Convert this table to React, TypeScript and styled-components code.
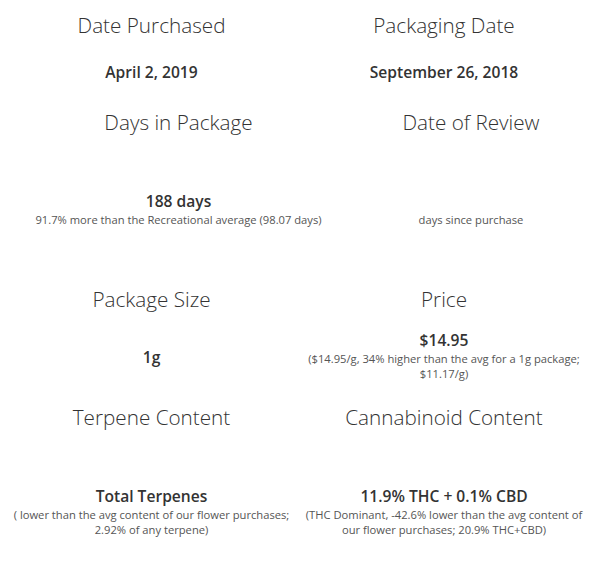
import * as React from 'react';
import styled, { createGlobalStyle } from 'styled-components';

const GlobalStyle = createGlobalStyle`
    html, body {
        margin: 0;
        padding: 0;
        background: #fff;
    }
    body {
        font-family: "Open Sans", "Liberation Sans", sans-serif;
        color: #333;
    }
`;

const Page = styled.div`
    width: 593px;
    height: 572px;
    display: grid;
    grid-template-columns: 303px 282px;
    grid-template-rows: 97px 177px 118px 180px;
    overflow: hidden;
`;

const Tile = styled.div<{ $shift?: number }>`
    display: flex;
    flex-direction: column;
    padding-left: ${(p) => p.$shift || 0}px;
`;

const Title = styled.div`
    flex-shrink: 0;
    height: 50px;
    display: flex;
    align-items: center;
    justify-content: center;
    font-size: 20.7px;
    font-weight: 300;
    color: #333;
    white-space: nowrap;
`;

const Body = styled.div<{ $top: number }>`
    flex-shrink: 0;
    display: flex;
    flex-direction: column;
    align-items: center;
    padding-top: ${(p) => p.$top}px;
`;

const Value = styled.div`
    height: 22px;
    line-height: 22px;
    font-size: 15.6px;
    font-weight: 600;
    color: #333;
    white-space: nowrap;
`;

const Note = styled.div`
    line-height: 15px;
    font-size: 11.2px;
    color: #555;
    white-space: nowrap;
    text-align: center;
`;

export default function App(): JSX.Element {
    return (
        <Page>
            <GlobalStyle />
            <Tile>
                <Title>Date Purchased</Title>
                <Body $top={11}>
                    <Value>April 2, 2019</Value>
                </Body>
            </Tile>
            <Tile>
                <Title>Packaging Date</Title>
                <Body $top={11}>
                    <Value>September 26, 2018</Value>
                </Body>
            </Tile>
            <Tile $shift={54}>
                <Title>Days in Package</Title>
                <Body $top={43}>
                    <Value>188 days</Value>
                    <Note>91.7% more than the Recreational average (98.07 days)</Note>
                </Body>
            </Tile>
            <Tile $shift={54}>
                <Title>Date of Review</Title>
                <Body $top={43}>
                    <Value />
                    <Note>days since purchase</Note>
                </Body>
            </Tile>
            <Tile>
                <Title>Package Size</Title>
                <Body $top={22}>
                    <Value>1g</Value>
                </Body>
            </Tile>
            <Tile>
                <Title>Price</Title>
                <Body $top={5}>
                    <Value>$14.95</Value>
                    <Note>($14.95/g, 34% higher than the avg for a 1g package;</Note>
                    <Note>$11.17/g)</Note>
                </Body>
            </Tile>
            <Tile>
                <Title>Terpene Content</Title>
                <Body $top={43}>
                    <Value>Total Terpenes</Value>
                    <Note>( lower than the avg content of our flower purchases;</Note>
                    <Note>2.92% of any terpene)</Note>
                </Body>
            </Tile>
            <Tile>
                <Title>Cannabinoid Content</Title>
                <Body $top={43}>
                    <Value>11.9% THC + 0.1% CBD</Value>
                    <Note>(THC Dominant, -42.6% lower than the avg content of</Note>
                    <Note>our flower purchases; 20.9% THC+CBD)</Note>
                </Body>
            </Tile>
        </Page>
    );
}
